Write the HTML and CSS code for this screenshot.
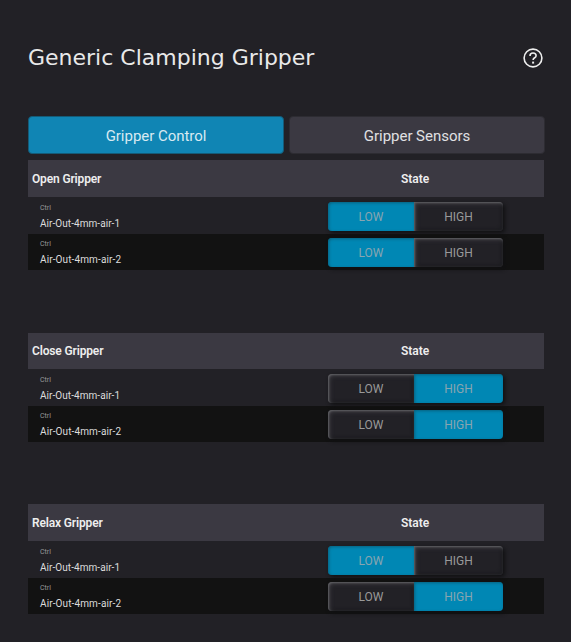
FILE: index.html
```
<!DOCTYPE html>
<html lang="en">
<head>
<meta charset="utf-8">
<title>Generic Clamping Gripper</title>
<link rel="stylesheet" href="styles.css">
</head>
<body>
<header class="top">
  <h1>Generic Clamping Gripper</h1>
  <svg class="help" viewBox="0 0 20 20" fill="none" stroke="#eee" stroke-width="1.6"><circle cx="10" cy="10" r="8.9"/><path d="M7 7.9C7 6 8.3 5 10 5s3.1 1 3.1 2.7c0 2.1-3 2-3 4.2"/><path d="M10.1 13.6v2" stroke-width="2"/></svg>
</header>
<nav class="tabs"><button class="tab active">Gripper Control</button><button class="tab">Gripper Sensors</button></nav>
<main>
  <section class="group">
    <div class="head"><h2>Open Gripper</h2><span class="state">State</span></div>
    <div class="row"><div class="name"><small>Ctrl</small><p>Air-Out-4mm-air-1</p></div><div class="toggle"><button class="low on">LOW</button><button class="high">HIGH</button></div></div>
    <div class="row dark"><div class="name"><small>Ctrl</small><p class="two">Air-Out-4mm-air-2</p></div><div class="toggle"><button class="low on">LOW</button><button class="high">HIGH</button></div></div>
  </section>
  <section class="group close">
    <div class="head"><h2>Close Gripper</h2><span class="state">State</span></div>
    <div class="row"><div class="name"><small>Ctrl</small><p>Air-Out-4mm-air-1</p></div><div class="toggle"><button class="low">LOW</button><button class="high on">HIGH</button></div></div>
    <div class="row dark"><div class="name"><small>Ctrl</small><p class="two">Air-Out-4mm-air-2</p></div><div class="toggle"><button class="low">LOW</button><button class="high on">HIGH</button></div></div>
  </section>
  <section class="group relax">
    <div class="head"><h2>Relax Gripper</h2><span class="state">State</span></div>
    <div class="row"><div class="name"><small>Ctrl</small><p>Air-Out-4mm-air-1</p></div><div class="toggle"><button class="low on">LOW</button><button class="high">HIGH</button></div></div>
    <div class="row dark"><div class="name"><small>Ctrl</small><p class="two">Air-Out-4mm-air-2</p></div><div class="toggle"><button class="low">LOW</button><button class="high on">HIGH</button></div></div>
  </section>
</main>
</body>
</html>
```
FILE: styles.css
```
* { box-sizing: border-box; }
body { margin: 0; height: 642px; padding: 0 27px 0 28px; overflow: hidden; background: #222126; color: #eee; font-family: Roboto, "Liberation Sans", sans-serif; }
h1, h2, p { margin: 0; }
button { margin: 0; padding: 0; border: 0; font-family: inherit; }
.top { display: flex; align-items: center; justify-content: space-between; height: 116px; padding-right: 1px; }
h1 { font: 400 22px/30px "DejaVu Sans", sans-serif; white-space: nowrap; color: #e9e9e9; }
.help { width: 20px; height: 20px; }
.tabs { display: grid; grid-template-columns: 256px 256px; gap: 5px; height: 38px; }
.tab { height: 38px; padding-top: 2px; border: 1px solid #2d2c32; border-radius: 4px; background: #3b3942; color: #e0e0e3; font-size: 15px; letter-spacing: -.03px; }
.tab.active { border-color: #155b77; background: #1085b4; color: #d8eaf2; }
main { padding: 6px 0 0; width: 516px; }
.head { display: flex; align-items: center; height: 37px; padding-left: 4px; background: #3b3942; }
h2, .state { font-size: 12px; line-height: 18px; font-weight: 600; white-space: nowrap; }
h2 { width: 369px; letter-spacing: -.15px; }
.close { margin-top: 63px; }
.close .head { height: 36px; }
.relax { margin-top: 62px; }
.row { display: flex; height: 37px; padding: 5px 0 0 12px; }
.row.dark { height: 36px; padding-top: 4px; background: #121212; }
.name { width: 288px; }
small { display: block; height: 12px; color: #999; font-size: 7px; line-height: 12px; }
p { font-size: 10px; line-height: 20px; white-space: nowrap; letter-spacing: .06px; color: #ddd; }
p.two { letter-spacing: .12px; }
.toggle { display: flex; width: 175px; height: 29px; border-radius: 4px; box-shadow: 2px 2px 4px #101012; }
.toggle button { height: 29px; background: #222126; color: #999; font-size: 12px; box-shadow: inset 1px 1px 2px #606064, inset 2px 2px 4px #3c3b40, inset -2px -2px 3px #1c1c1f; }
.toggle .low { width: 86px; border-radius: 4px 0 0 4px; }
.toggle .high { width: 89px; border-radius: 0 4px 4px 0; }
.toggle .on { background: #0087b4; color: #88a5b0; box-shadow: inset 1px 1px 3px #08627f; }
```
